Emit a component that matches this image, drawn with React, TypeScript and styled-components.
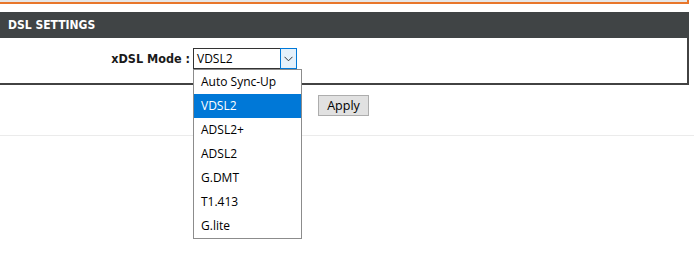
import React from 'react';
import styled, { createGlobalStyle } from 'styled-components';

const GlobalStyle = createGlobalStyle`
  html, body {
    margin: 0;
    background: #ffffff;
    font-family: "DejaVu Sans", Verdana, sans-serif;
  }
`;

const Page = styled.div`
  width: 694px;
  min-height: 260px;
  display: flex;
  flex-direction: column;
`;

const TopCard = styled.div`
  width: 687px;
  height: 2px;
  background: #e6e6e6;
  border-right: 2px solid #e8762b;
  border-bottom: 2px solid #e8762b;
`;

const Section = styled.div`
  width: 689px;
  margin-top: 8px;
  display: flex;
  flex-direction: column;
`;

const SectionHeader = styled.div`
  height: 26px;
  background: #404445;
  color: #ffffff;
  font-family: "DejaVu Sans Condensed", "DejaVu Sans", sans-serif;
  font-weight: bold;
  font-size: 12px;
  line-height: 26px;
  padding-left: 8px;
`;

const SectionBody = styled.div`
  background: #ffffff;
  border-right: 2px solid #424242;
  border-bottom: 2px solid #424242;
  padding: 10px 0 14px;
`;

const FormRow = styled.div`
  display: grid;
  grid-template-columns: 190px auto;
  column-gap: 3px;
  align-items: center;
`;

const FieldLabel = styled.label`
  text-align: right;
  font-family: "DejaVu Sans Condensed", "DejaVu Sans", sans-serif;
  font-weight: bold;
  font-size: 12.5px;
  color: #1a1a1a;
`;

const SelectWrap = styled.div`
  position: relative;
  width: 104px;
`;

const SelectBox = styled.div`
  height: 21px;
  display: flex;
  box-sizing: border-box;
`;

const SelectValue = styled.div`
  flex: 1;
  border: 1px solid #333333;
  border-right: none;
  font-family: "Open Sans", "Noto Sans", sans-serif;
  font-size: 12px;
  line-height: 19px;
  padding-left: 3px;
  color: #000000;
`;

const SelectArrow = styled.div`
  width: 15px;
  border: 1px solid #0078d7;
  background: #e5f1fb;
  display: flex;
  align-items: center;
  justify-content: center;
`;

const OptionList = styled.ul`
  position: absolute;
  top: 21px;
  left: 0;
  width: 109px;
  margin: 0;
  padding: 0;
  list-style: none;
  background: #ffffff;
  border: 1px solid #8c8c8c;
  box-sizing: border-box;
  z-index: 5;
`;

const OptionItem = styled.li<{ $selected?: boolean }>`
  height: 24px;
  line-height: 24px;
  padding-left: 7px;
  font-family: "Open Sans", "Noto Sans", sans-serif;
  font-size: 12px;
  color: ${(p) => (p.$selected ? '#ffffff' : '#000000')};
  background: ${(p) => (p.$selected ? '#0078d7' : 'transparent')};
`;

const ButtonRow = styled.div`
  width: 687px;
  display: flex;
  justify-content: center;
  padding: 10px 0 19px;
`;

const ApplyButton = styled.button`
  width: 51px;
  height: 21px;
  padding: 0;
  background: #e1e1e1;
  border: 1px solid #adadad;
  font-family: "Open Sans", "Noto Sans", sans-serif;
  font-size: 12.5px;
  color: #000000;
`;

const Divider = styled.div`
  height: 1px;
  background: #ebebeb;
`;

const modes = ['Auto Sync-Up', 'VDSL2', 'ADSL2+', 'ADSL2', 'G.DMT', 'T1.413', 'G.lite'];

export default function App() {
  const current = 'VDSL2';
  return (
    <>
      <GlobalStyle />
      <Page>
        <TopCard />
        <Section>
          <SectionHeader>DSL SETTINGS</SectionHeader>
          <SectionBody>
            <FormRow>
              <FieldLabel>xDSL Mode :</FieldLabel>
              <SelectWrap>
                <SelectBox>
                  <SelectValue>{current}</SelectValue>
                  <SelectArrow>
                    <svg width="9" height="6" viewBox="0 0 9 6">
                      <path d="M0.5 0.8 L4.5 4.8 L8.5 0.8" fill="none" stroke="#333" strokeWidth="1" />
                    </svg>
                  </SelectArrow>
                </SelectBox>
                <OptionList>
                  {modes.map((m) => (
                    <OptionItem key={m} $selected={m === current}>
                      {m}
                    </OptionItem>
                  ))}
                </OptionList>
              </SelectWrap>
            </FormRow>
          </SectionBody>
        </Section>
        <ButtonRow>
          <ApplyButton>Apply</ApplyButton>
        </ButtonRow>
        <Divider />
      </Page>
    </>
  );
}
